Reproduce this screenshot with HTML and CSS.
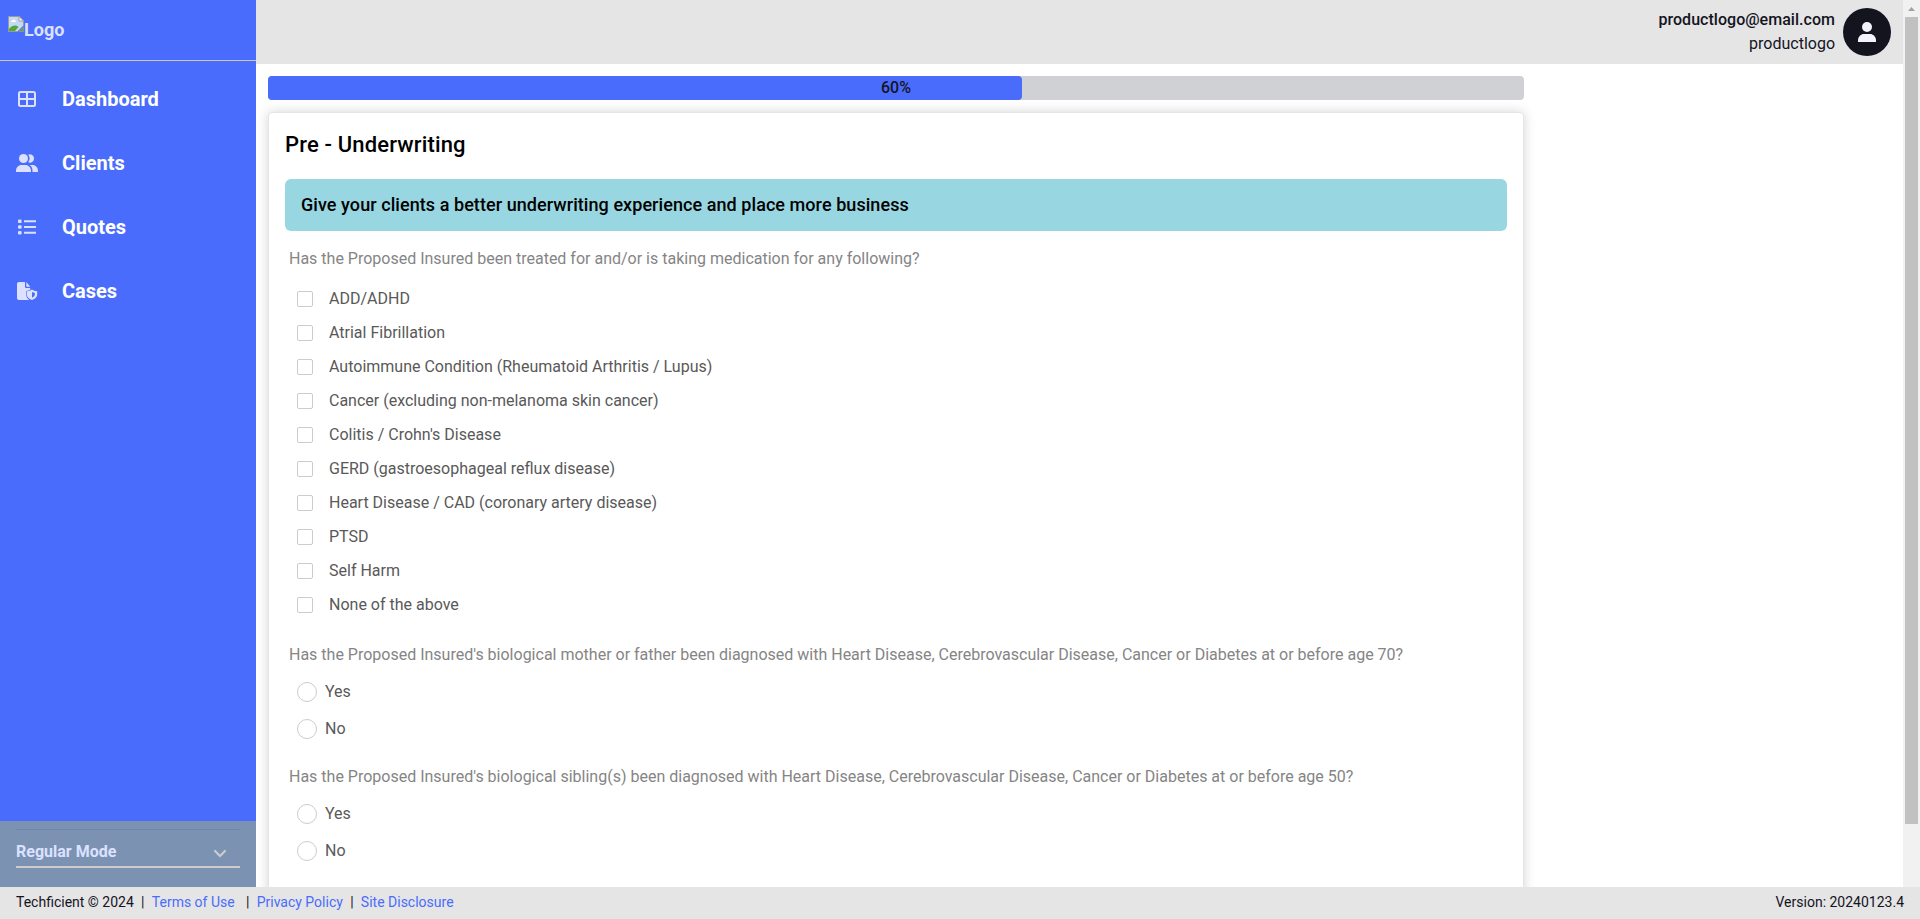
FILE: index.html
```html
<!DOCTYPE html>
<html lang="en">
<head>
<meta charset="utf-8">
<title>Pre - Underwriting</title>
<link rel="stylesheet" href="styles.css">
</head>
<body>
<div class="app">
  <div class="workspace">
    <aside class="sidebar">
      <div class="logo">
        <svg width="16" height="16" viewBox="0 0 16 16">
          <path d="M.5.5h10.8l4.2 4.2v5.1l-6 5.7h-9z" fill="#c3d9f7" stroke="#9a9a9a"/>
          <path d="M1 15v-2c2-3 4-3.500 6-3.500 1.500 0 2.500.5 3.500 1.500L7 15z" fill="#52a83a"/>
          <path d="M3 6c0-1.500 1-1.500 1.500-1.500C5 3 7 3.300 7 4.500 8 4.500 8 6 8 6z" fill="#fff"/>
          <path d="M11 .5v4.500h4.500z" fill="#fff" stroke="#9a9a9a"/>
          <path d="M11 15.500l4.500-4v4z" fill="#52a83a" stroke="#9a9a9a" stroke-width=".7"/>
        </svg><span>Logo</span>
      </div>
      <nav class="nav">
        <a class="nav-item">
          <svg class="nav-icon" viewBox="0 0 22 22" fill="none" stroke="currentColor" stroke-width="2"><rect x="3" y="4" width="16" height="14" rx="1.500"/><path d="M11 4v14M3 11h16"/></svg>
          <span>Dashboard</span>
        </a>
        <a class="nav-item">
          <svg class="nav-icon" viewBox="0 0 22 22" fill="currentColor"><circle cx="7.500" cy="6.500" r="4.500"/><path d="M12.200 2.800a4.100 4.100 0 1 1 0 7.400 6 6 0 0 0 0-7.400z"/><path d="M0 20v-1.500C0 15.500 2.500 13 5.500 13h4c3 0 5.500 2.500 5.500 5.500V20zM16.500 20v-1.500c0-2.300-1.100-4.200-2.800-5.500h2.800c3 0 5.500 2.500 5.500 5.500V20z"/></svg>
          <span>Clients</span>
        </a>
        <a class="nav-item">
          <svg class="nav-icon" viewBox="0 0 22 22" fill="currentColor"><rect x="2" y="3.500" width="3.600" height="3.600" rx="1.200"/><rect x="2" y="9.200" width="3.600" height="3.600" rx="1.200"/><rect x="2" y="14.900" width="3.600" height="3.600" rx="1.200"/><path d="M8 4.300h12v2H8zM8 10h12v2H8zM8 15.700h12v2H8z"/></svg>
          <span>Quotes</span>
        </a>
        <a class="nav-item">
          <svg class="nav-icon" viewBox="0 0 22 22" fill="currentColor"><path d="M3 2h6v4.500C9 7.500 9.500 8 10.500 8h3.700v1.700c-1.200.8-2.400 1.100-4 1.300v3c0 2.500 1 4.500 3 6H3c-1.200 0-2-.8-2-2V4c0-1.200.8-2 2-2z"/><path d="M10.300 2l4 4.700h-4z"/><path fill-rule="evenodd" d="M16 9.500c1.500 1 3 1.500 5.200 1.700v3.300c0 2.500-2 4.500-5.200 5.500-3.200-1-5.200-3-5.200-5.500v-3.300c2.200-.2 3.700-.7 5.200-1.700zm0 2.500v5.700c1.800-.7 2.900-1.900 2.900-3.400V13c-1.200-.2-2-.5-2.900-1z"/></svg>
          <span>Cases</span>
        </a>
      </nav>
      <div class="mode">
        <div class="mode-select">
          <span>Regular Mode</span>
          <svg width="14" height="10" viewBox="0 0 14 10"><path d="M2 2l5 5 5-5" fill="none" stroke="#ccc" stroke-width="2.200" stroke-linecap="round"/></svg>
        </div>
      </div>
    </aside>
    <div class="page">
      <header class="topbar">
        <div class="user">
          <span class="user-email">productlogo@email.com</span>
          <span>productlogo</span>
        </div>
        <div class="avatar">
          <svg width="18" height="20" viewBox="0 0 18 20" fill="#f1f4fb"><circle cx="9" cy="5" r="5"/><path d="M0 20v-1.500C0 14.500 3 12 6 12h6c3 0 6 2.500 6 6.500V20z"/></svg>
        </div>
      </header>
      <main class="content">
        <div class="progress"><div class="progress-fill" style="width:60%"></div><span class="progress-label">60%</span></div>
        <section class="card">
          <h1 class="card-title">Pre - Underwriting</h1>
          <div class="banner">Give your clients a better underwriting experience and place more business</div>
          <div class="question">
            <p class="prompt">Has the Proposed Insured been treated for and/or is taking medication for any following?</p>
            <div class="checks">
              <label class="check"><i class="box"></i>ADD/ADHD</label>
              <label class="check"><i class="box"></i>Atrial Fibrillation</label>
              <label class="check"><i class="box"></i>Autoimmune Condition (Rheumatoid Arthritis / Lupus)</label>
              <label class="check"><i class="box"></i>Cancer (excluding non-melanoma skin cancer)</label>
              <label class="check"><i class="box"></i>Colitis / Crohn's Disease</label>
              <label class="check"><i class="box"></i>GERD (gastroesophageal reflux disease)</label>
              <label class="check"><i class="box"></i>Heart Disease / CAD (coronary artery disease)</label>
              <label class="check"><i class="box"></i>PTSD</label>
              <label class="check"><i class="box"></i>Self Harm</label>
              <label class="check"><i class="box"></i>None of the above</label>
            </div>
          </div>
          <div class="question">
            <p class="prompt">Has the Proposed Insured's biological mother or father been diagnosed with Heart Disease, Cerebrovascular Disease, Cancer or Diabetes at or before age 70?</p>
            <div class="radios">
              <label class="radio"><i class="dot"></i>Yes</label>
              <label class="radio"><i class="dot"></i>No</label>
            </div>
          </div>
          <div class="question">
            <p class="prompt">Has the Proposed Insured's biological sibling(s) been diagnosed with Heart Disease, Cerebrovascular Disease, Cancer or Diabetes at or before age 50?</p>
            <div class="radios">
              <label class="radio"><i class="dot"></i>Yes</label>
              <label class="radio"><i class="dot"></i>No</label>
            </div>
          </div>
        </section>
      </main>
    </div>
    <div class="scrollbar">
      <svg width="17" height="17" viewBox="0 0 17 17"><path d="M5 11l3.500-4 3.500 4z" fill="#a3a3a3"/></svg>
      <div class="thumb"></div>
    </div>
  </div>
  <footer class="footer">
    <div class="links">
      <span>Techficient © 2024</span><span class="bar">|</span><a>Terms of Use</a><span class="bar bar-wide">|</span><a>Privacy Policy</a><span class="bar">|</span><a>Site Disclosure</a>
    </div>
    <span>Version: 20240123.4</span>
  </footer>
</div>
</body>
</html>
```
FILE: styles.css
```css
* { box-sizing: border-box; }
body {
  margin: 0;
  font: 16px/24px Roboto, "Liberation Sans", sans-serif;
  color: #14141f;
  background: #fff;
}
.app { display: flex; flex-direction: column; height: 919px; overflow: hidden; }
.workspace { display: flex; height: 887px; }

.sidebar { display: flex; flex-direction: column; width: 256px; background: #4a6cfc; color: #dbe1ff; }
.logo {
  display: flex; align-items: flex-start;
  height: 61px; padding: 16px 8px 0;
  border-bottom: 1px solid #c8c8c8;
  font-size: 18px; font-weight: 700; line-height: 27px;
}
.logo svg { flex: none; }
.nav { display: flex; flex-direction: column; padding-top: 6px; }
.nav-item { display: flex; align-items: center; gap: 24px; height: 64px; padding-left: 16px; font-size: 20px; font-weight: 700; }
.nav-item span { color: #fff; }
.nav-icon { width: 22px; height: 22px; }
.mode { height: 66px; margin-top: auto; padding: 8px 16px 0; background: #7c92b3; }
.mode-select {
  display: flex; align-items: center; justify-content: space-between;
  height: 39px; padding: 8px 13px 0 0;
  border-top: 1px solid #7186ab; border-bottom: 2px solid #ccc;
  font-weight: 700;
}
.mode-select svg { margin-top: 4px; }

.page { display: flex; flex-direction: column; width: 1647px; }
.topbar { display: flex; flex: none; align-items: center; justify-content: flex-end; gap: 8px; height: 64px; padding-right: 12px; background: #e5e5e5; }
.user { display: flex; flex-direction: column; align-items: flex-end; }
.user-email { font-weight: 500; letter-spacing: .03px; }
.avatar { display: flex; align-items: center; justify-content: center; width: 48px; height: 48px; border-radius: 50%; background: #14141f; }

.content { flex: 1; min-height: 0; width: 1280px; padding: 12px 12px 0; overflow: hidden; }
.progress { position: relative; height: 24px; border-radius: 4px; background: #d0d1d5; }
.progress-fill { height: 24px; border-radius: 4px; background: #4a6cfc; }
.progress-label { position: absolute; inset: 0; text-align: center; font-weight: 500; line-height: 23px; }
.card { height: 900px; margin-top: 12px; padding: 16px; border: 1px solid #e5e5e5; border-radius: 4px; background: #fff; box-shadow: 0 0 12px rgba(0, 0, 0, .17); }
.card-title { margin: 0; font-size: 22px; font-weight: 500; line-height: 32px; letter-spacing: .15px; color: #000; }
.banner { height: 52px; margin: 18px 0 16px; padding: 0 16px; border-radius: 6px; background: #98d7e1; font-size: 18px; font-weight: 500; line-height: 52px; letter-spacing: .065px; color: #000; }
.question { padding-left: 4px; }
.prompt { margin: 0; color: #858585; }
.checks { padding: 12px 8px 20px; }
.check { display: flex; align-items: center; gap: 16px; height: 34px; color: #595959; padding-bottom: 2px; }
.box { width: 16px; height: 16px; border: 1px solid #ccc; border-radius: 2px; }
.radios { padding: 6px 8px 18px; }
.radio { display: flex; align-items: center; gap: 8px; height: 37px; color: #595959; }
.dot { width: 20px; height: 20px; margin-top: 1px; border: 1px solid #ccc; border-radius: 50%; }

.scrollbar { width: 17px; background: #f1f1f1; }
.scrollbar svg { display: block; }
.thumb { width: 13px; height: 807px; margin-left: 2px; background: #c1c1c1; }

.footer { display: flex; justify-content: space-between; height: 32px; padding: 0 16px; background: #e5e5e5; font-size: 14px; line-height: 30px; }
.links { display: flex; }
.links a { color: #4a6cfc; }
.bar { width: 18px; text-align: center; }
.bar-wide { width: 22px; padding-left: 4px; }
```
